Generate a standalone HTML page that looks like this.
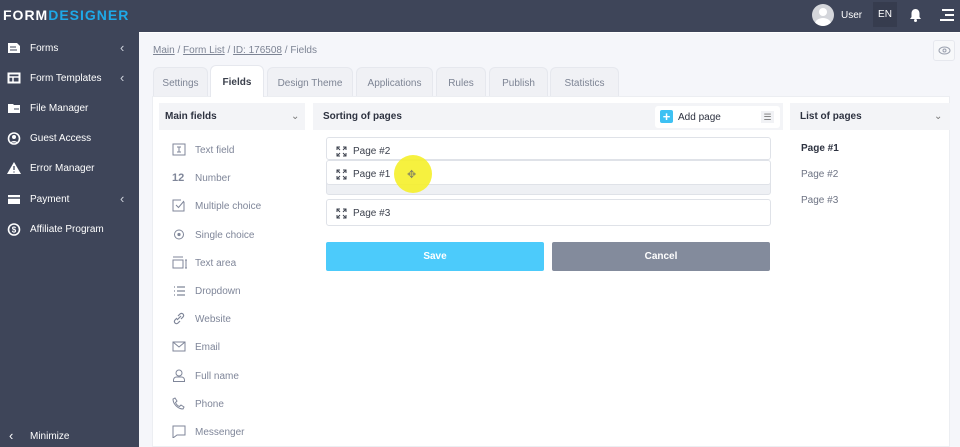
<!DOCTYPE html>
<html><head><meta charset="utf-8"><style>
*{box-sizing:border-box;margin:0;padding:0}
body{width:960px;height:447px;overflow:hidden;font-family:"Liberation Sans",sans-serif;background:#f5f6fa;position:relative;font-size:10px}
.abs{position:absolute}
.top{left:0;top:0;width:960px;height:32px;background:#3e4559}
.side{left:0;top:32px;width:139px;height:415px;background:#3e4559}
.si{position:absolute;left:0;height:20px;width:139px;color:#fff;font-size:10px;line-height:20px}
.si span{position:absolute;left:30px;top:1px}
.si svg{position:absolute;left:7px;top:4px}
.si b{position:absolute;left:120px;top:0;font-weight:normal;color:#cfd3dc;font-size:13px}
.tab{position:absolute;top:67px;height:29px;background:#f0f1f5;border:1px solid #e6e8ee;border-bottom:none;border-radius:6px 6px 0 0;color:#7d8494;font-size:10px;text-align:center;line-height:32px}
.fi{position:absolute;left:172px;color:#7f8699;font-size:10px}
.fi span{position:absolute;left:23px;top:1px;white-space:nowrap}
.fi svg{position:absolute;left:0;top:-1px}
.row{position:absolute;left:326px;width:445px;background:#fff;border:1px solid #dfe2e8;border-radius:3px;font-size:10px;color:#3a3f4b}
.row span{position:absolute;left:26px;top:8px}
.row svg{position:absolute;left:9px;top:8px}
</style></head><body>
<div class="abs top"></div>
<div class="abs" style="left:3px;top:7px;font-size:14px;font-weight:bold;letter-spacing:1px;color:#fff">FORM<span style="color:#1ea9e8">DESIGNER</span></div>
<div class="abs" style="left:812px;top:4px;width:22px;height:22px;border-radius:50%;background:#d4d6db;overflow:hidden"><div class="abs" style="left:7px;top:4px;width:8px;height:8px;border-radius:50%;background:#fff"></div><div class="abs" style="left:3px;top:14px;width:16px;height:12px;border-radius:50%;background:#fff"></div></div>
<div class="abs" style="left:841px;top:10px;color:#fff;font-size:10px">User</div>
<div class="abs" style="left:873px;top:2px;width:24px;height:25px;background:#363c4e;color:#fff;font-size:10px;text-align:center;line-height:25px">EN</div>
<svg class="abs" style="left:909px;top:8px" width="13" height="14" viewBox="0 0 13 14"><path d="M6.5 1c-2.5 0-4 2-4 4.5V9L1 11h11L10.5 9V5.5C10.5 3 9 1 6.5 1z" fill="#fff"/><circle cx="6.5" cy="12.5" r="1.5" fill="#fff"/></svg>
<svg class="abs" style="left:940px;top:9px" width="14" height="12"><rect x="2" y="0" width="12" height="2" fill="#fff"/><rect x="5" y="5" width="9" height="2" fill="#fff"/><rect x="0" y="10" width="14" height="2" fill="#fff"/></svg>
<div class="abs side"></div>
<div class="si" style="top:38px"><svg width="14" height="12"><path d="M1 1h9l3 3v7H1z" fill="#fff"/><path d="M3 5h6M3 8h7" stroke="#3e4559"/></svg><span>Forms</span><b>‹</b></div>
<div class="si" style="top:68px"><svg width="14" height="12"><rect x="1.5" y="1.5" width="11" height="9" fill="none" stroke="#fff" stroke-width="2"/><path d="M2 5h10M6 5v5" stroke="#fff" stroke-width="1.5"/></svg><span>Form Templates</span><b>‹</b></div>
<div class="si" style="top:98px"><svg width="14" height="12"><path d="M1 2h5l1 1h6v8H1z" fill="#fff"/><path d="M7 7h5" stroke="#3e4559"/></svg><span>File Manager</span></div>
<div class="si" style="top:128px"><svg width="14" height="13"><circle cx="7" cy="6.5" r="5.5" fill="none" stroke="#fff" stroke-width="1.6"/><circle cx="7" cy="5" r="2" fill="#fff"/><path d="M3.5 10.5a4 3 0 017 0" fill="#fff"/></svg><span>Guest Access</span></div>
<div class="si" style="top:158px"><svg width="14" height="12"><path d="M7 0L14 12H0z" fill="#fff"/><path d="M7 4v4M7 9.5v1" stroke="#3e4559" stroke-width="1.3"/></svg><span>Error Manager</span></div>
<div class="si" style="top:189px"><svg width="14" height="12"><rect x="1" y="2" width="12" height="9" fill="#fff"/><path d="M1 5h12" stroke="#3e4559" stroke-width="1.5"/></svg><span>Payment</span><b>‹</b></div>
<div class="si" style="top:219px"><svg width="14" height="13"><circle cx="7" cy="6.5" r="5.5" fill="none" stroke="#fff" stroke-width="1.6"/><text x="7" y="9.5" font-size="8" font-weight="bold" fill="#fff" text-anchor="middle" font-family="Liberation Sans">$</text></svg><span>Affiliate Program</span></div>
<div class="si" style="top:426px"><b style="left:9px;color:#fff">‹</b><span>Minimize</span></div>
<div class="abs" style="left:139px;top:32px;width:821px;height:415px;background:#f5f6fa;border-top:1px solid #fff"></div>
<div class="abs" style="left:153px;top:45px;color:#7d8494;font-size:10px"><u>Main</u> / <u>Form List</u> / <u>ID: 176508</u> / Fields</div>
<div class="abs" style="left:933px;top:40px;width:22px;height:21px;border:1px solid #e6e8ee;border-radius:3px;background:#f7f8fa"><svg class="abs" style="left:4px;top:5px" width="13" height="9"><ellipse cx="6.5" cy="4.5" rx="5.5" ry="3.5" fill="none" stroke="#9aa0ae"/><circle cx="6.5" cy="4.5" r="1.5" fill="none" stroke="#9aa0ae"/></svg></div>
<div class="abs" style="left:152px;top:96px;width:798px;height:351px;background:#fff;border:1px solid #eceef2"></div>
<div class="tab" style="left:153px;width:55px">Settings</div>
<div class="tab" style="left:210px;width:54px;top:65px;height:32px;background:#fff;color:#3a3f4b;font-weight:bold;line-height:34px">Fields</div>
<div class="tab" style="left:267px;width:86px">Design Theme</div>
<div class="tab" style="left:356px;width:77px">Applications</div>
<div class="tab" style="left:436px;width:50px">Rules</div>
<div class="tab" style="left:489px;width:59px">Publish</div>
<div class="tab" style="left:550px;width:69px">Statistics</div>
<div class="abs" style="left:159px;top:103px;width:146px;height:27px;background:#f3f4f7;font-weight:bold;color:#2d3240;font-size:10px;line-height:28px;padding-left:6px">Main fields<span style="position:absolute;left:132px;font-weight:normal;color:#777">⌄</span></div>
<div class="abs" style="left:313px;top:103px;width:470px;height:27px;background:#f3f4f7;font-weight:bold;color:#2d3240;font-size:10px;line-height:28px;padding-left:10px">Sorting of pages</div>
<div class="abs" style="left:655px;top:106px;width:125px;height:22px;background:#fff;border-radius:3px"><div class="abs" style="left:5px;top:4px;width:13px;height:13px;background:#3ec1f3;border-radius:2px;color:#fff;font-weight:bold;font-size:13px;line-height:13px;text-align:center">+</div><div class="abs" style="left:23px;top:6px;color:#2d3240;font-size:10px">Add page</div><div class="abs" style="left:106px;top:5px;width:13px;height:12px;background:#f1f2f5;font-size:9px;color:#777;text-align:center;line-height:12px">☰</div></div>
<div class="abs" style="left:790px;top:103px;width:160px;height:27px;background:#f3f4f7;font-weight:bold;color:#2d3240;font-size:10px;line-height:28px;padding-left:10px">List of pages<span style="position:absolute;left:144px;font-weight:normal;color:#777">⌄</span></div>
<div class="abs" style="left:801px;top:143px;font-weight:bold;color:#2d3240">Page #1</div>
<div class="abs" style="left:801px;top:169px;color:#6d7383">Page #2</div>
<div class="abs" style="left:801px;top:195px;color:#6d7383">Page #3</div>
<div class="abs" style="left:326px;top:180px;width:445px;height:15px;background:#eef0f4;border:1px solid #dfe2e8;border-radius:3px"></div>
<div class="row" style="top:137px;height:23px"><svg width="11" height="11" viewBox="0 0 11 11" fill="none" stroke="#3a3f4b"><path d="M1 4V1h3M7 1h3v3M10 7v3H7M4 10H1V7M1 1l3 3M10 1L7 4M10 10L7 7M1 10l3-3"/></svg><span>Page #2</span></div>
<div class="row" style="top:160px;height:25px"><svg width="11" height="11" viewBox="0 0 11 11" fill="none" stroke="#3a3f4b"><path d="M1 4V1h3M7 1h3v3M10 7v3H7M4 10H1V7M1 1l3 3M10 1L7 4M10 10L7 7M1 10l3-3"/></svg><span>Page #1</span></div>
<div class="row" style="top:199px;height:27px"><svg width="11" height="11" viewBox="0 0 11 11" fill="none" stroke="#3a3f4b" style="top:8px"><path d="M1 4V1h3M7 1h3v3M10 7v3H7M4 10H1V7M1 1l3 3M10 1L7 4M10 10L7 7M1 10l3-3"/></svg><span style="top:8px">Page #3</span></div>
<div class="abs" style="left:394px;top:155px;width:38px;height:38px;border-radius:50%;background:#f5f02a;opacity:.9"></div>
<div class="abs" style="left:407px;top:168px;color:#8a8a60;font-size:11px">✥</div>
<div class="abs" style="left:326px;top:242px;width:218px;height:29px;background:#4ccbfb;border-radius:2px;color:#fff;font-weight:bold;text-align:center;line-height:30px">Save</div>
<div class="abs" style="left:552px;top:242px;width:218px;height:29px;background:#838b9c;border-radius:2px;color:#fff;font-weight:bold;text-align:center;line-height:30px">Cancel</div>
<div class="fi" style="top:144px"><svg width="14" height="13"><rect x="1" y="1" width="12" height="11" fill="none" stroke="#7f8699"/><path d="M5 4h4M7 4v5M5 9h4" stroke="#7f8699"/></svg><span>Text field</span></div>
<div class="fi" style="top:172px"><b style="font-size:11px;color:#7f8699">12</b><span>Number</span></div>
<div class="fi" style="top:200px"><svg width="14" height="13"><path d="M12 3v9H1V1h8" fill="none" stroke="#7f8699"/><path d="M4 6l2.5 2.5L12 2" fill="none" stroke="#7f8699"/></svg><span>Multiple choice</span></div>
<div class="fi" style="top:229px"><svg width="14" height="13"><circle cx="7" cy="6.5" r="4.5" fill="none" stroke="#7f8699"/><circle cx="7" cy="6.5" r="1.6" fill="#7f8699"/></svg><span>Single choice</span></div>
<div class="fi" style="top:257px"><svg width="16" height="13"><path d="M1 1h10" stroke="#7f8699"/><rect x="1" y="4" width="10" height="8" fill="none" stroke="#7f8699"/><path d="M14 4v8M13 4h2M13 12h2" stroke="#7f8699"/></svg><span>Text area</span></div>
<div class="fi" style="top:285px"><svg width="14" height="13"><path d="M5 3h8M5 7h8M5 11h8M2 3h1M2 7h1M2 11h1" stroke="#7f8699" stroke-width="1.3"/></svg><span>Dropdown</span></div>
<div class="fi" style="top:313px"><svg width="14" height="13"><path d="M6 4l2-2a2 2 0 013 3l-2 2M8 9l-2 2a2 2 0 01-3-3l2-2M5 8l4-4" fill="none" stroke="#7f8699" stroke-width="1.2"/></svg><span>Website</span></div>
<div class="fi" style="top:341px"><svg width="14" height="13"><rect x="1" y="2" width="12" height="9" fill="none" stroke="#7f8699"/><path d="M1 2l6 5 6-5" fill="none" stroke="#7f8699"/></svg><span>Email</span></div>
<div class="fi" style="top:370px"><svg width="14" height="13"><circle cx="7" cy="4" r="3" fill="none" stroke="#7f8699"/><path d="M1.5 12.5v-1.5a3 3 0 013-3h5a3 3 0 013 3v1.5z" fill="none" stroke="#7f8699"/></svg><span>Full name</span></div>
<div class="fi" style="top:398px"><svg width="14" height="13"><path d="M3 1l2 3-1.5 1.5a7 7 0 004 4L9 8l3 2-1 2C6 12 1 7 1 2z" fill="none" stroke="#7f8699"/></svg><span>Phone</span></div>
<div class="fi" style="top:426px"><svg width="14" height="13"><path d="M1 1h12v9H5l-4 3z" fill="none" stroke="#7f8699"/></svg><span>Messenger</span></div>
</body></html>
